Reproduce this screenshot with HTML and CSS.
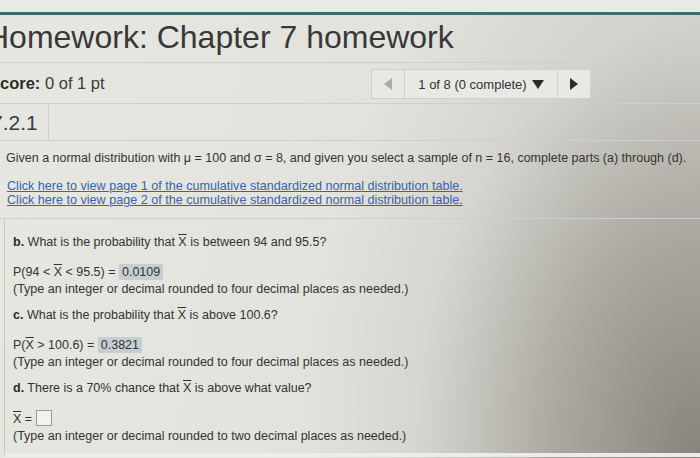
FILE: index.html
```html
<!DOCTYPE html>
<html>
<head>
<meta charset="utf-8">
<link rel="stylesheet" href="styles.css">
</head>
<body>
<div class="screen">
  <div class="topbar"></div>
  <h1 class="title">Homework: Chapter 7 homework</h1>
  <div class="scorerow">
    <div class="score"><b>Score:</b> 0 of 1 pt</div>
    <div class="nav">
      <div class="nav-btn prev"><svg width="8" height="12" viewBox="0 0 8 12"><path d="M8 0 L0 6 L8 12 Z" fill="#a9a9a6"/></svg></div>
      <div class="nav-mid">1 of 8 (0 complete) <svg width="12" height="9" viewBox="0 0 12 9"><path d="M0 0 L12 0 L6 9 Z" fill="#2b2b2b"/></svg></div>
      <div class="nav-btn next"><svg width="8" height="12" viewBox="0 0 8 12"><path d="M0 0 L8 6 L0 12 Z" fill="#2b2b2b"/></svg></div>
    </div>
  </div>
  <div class="qrow">
    <div class="qnum">7.2.1</div>
  </div>
  <div class="question">
    <p class="intro">Given a normal distribution with μ = 100 and σ = 8, and given you select a sample of n = 16, complete parts (a) through (d).</p>
    <div class="links">
      <a href="#">Click here to view page 1 of the cumulative standardized normal distribution table.</a>
      <a href="#">Click here to view page 2 of the cumulative standardized normal distribution table.</a>
    </div>
  </div>
  <div class="answers">
    <p class="part"><b>b.</b> What is the probability that <span class="xbar">X</span> is between 94 and 95.5?</p>
    <p class="eq">P(94 &lt; <span class="xbar">X</span> &lt; 95.5) = <span class="ans">0.0109</span></p>
    <p class="hint">(Type an integer or decimal rounded to four decimal places as needed.)</p>
    <p class="part"><b>c.</b> What is the probability that <span class="xbar">X</span> is above 100.6?</p>
    <p class="eq">P(<span class="xbar">X</span> &gt; 100.6) = <span class="ans">0.3821</span></p>
    <p class="hint">(Type an integer or decimal rounded to four decimal places as needed.)</p>
    <p class="part"><b>d.</b> There is a 70% chance that <span class="xbar">X</span> is above what value?</p>
    <p class="eq"><span class="xbar">X</span> = <span class="box"></span></p>
    <p class="hint">(Type an integer or decimal rounded to two decimal places as needed.)</p>
  </div>
</div>
</body>
</html>
```
FILE: styles.css
```css
html, body {
  margin: 0;
  padding: 0;
}
body {
  width: 700px;
  height: 458px;
  overflow: hidden;
  font-family: "Liberation Sans", Arial, sans-serif;
  color: #3a3a3a;
}
.screen {
  width: 700px;
  height: 458px;
  overflow: hidden;
  background:
    radial-gradient(ellipse 400px 620px at 100% 100%, rgba(135,132,124,1) 0%, rgba(160,158,150,0.85) 35%, rgba(196,195,188,0.4) 70%, rgba(225,225,219,0) 100%),
    linear-gradient(100deg, #e7e7e2 0%, #e2e2dc 60%, #d8d7d1 100%);
}
.topbar {
  height: 12px;
  background: #e9e9e5;
  border-bottom: 3px solid #3f6c70;
}
.title {
  margin: 0 0 0 -14px;
  padding-top: 2px;
  height: 45px;
  font-size: 32px;
  line-height: 40px;
  font-weight: normal;
  color: #383838;
  border-bottom: 1px solid #cfcfc9;
}
.scorerow {
  display: flex;
  align-items: center;
  justify-content: space-between;
  height: 40px;
  border-bottom: 1px solid #cfcfc9;
  padding-right: 109px;
}
.score {
  margin-left: -11px;
  font-size: 16.5px;
  color: #3a3a3a;
}
.score b {
  color: #2e2e2e;
}
.nav {
  display: flex;
  height: 28px;
  border: 1px solid #d0d0cb;
  background: #e8e8e4;
  margin-top: 2px;
}
.nav-btn {
  width: 32px;
  display: flex;
  align-items: center;
  justify-content: center;
}
.nav-mid {
  width: 152px;
  display: flex;
  align-items: center;
  justify-content: center;
  gap: 5px;
  font-size: 13px;
  color: #333;
  border-left: 1px solid #d0d0cb;
  border-right: 1px solid #d0d0cb;
}
.qrow {
  height: 36px;
  border-bottom: 1px solid #cfcfc9;
}
.qnum {
  width: 57px;
  height: 36px;
  margin-left: -9px;
  border-right: 1px solid #cfcfc9;
  font-size: 21px;
  line-height: 38px;
  color: #3a3a3a;
}
.question {
  padding: 9px 0 0 6px;
  height: 68px;
  border-bottom: 1px solid #cfcfc9;
}
.intro {
  margin: 0;
  font-size: 12.5px;
  line-height: 16px;
  color: #333;
}
.links {
  margin-top: 13px;
  display: flex;
  flex-direction: column;
}
.links a {
  font-size: 12.6px;
  line-height: 14px;
  color: #3b5fae;
  text-decoration: underline;
  margin-left: 1px;
}
.answers {
  margin-left: 4px;
  border-left: 1px solid #c8c8c2;
  padding: 15px 0 0 8px;
  height: 219px;
  border-bottom: 4px solid #ecece8;
}
.answers p {
  margin: 0;
  font-size: 12.5px;
  color: #333;
}
.part {
  line-height: 16px;
  margin-bottom: 14px !important;
}
.part b {
  color: #2a2a2a;
}
.eq {
  line-height: 17px;
}
.hint {
  line-height: 16px;
  margin-bottom: 10px !important;
}
.xbar {
  text-decoration: overline;
}
.ans {
  display: inline-block;
  background: #c6ced3;
  padding: 0 3px;
  line-height: 16px;
}
.box {
  display: inline-block;
  width: 14px;
  height: 14px;
  border: 1px solid #9a9a96;
  background: #f2f2ef;
  vertical-align: -3px;
}
```
